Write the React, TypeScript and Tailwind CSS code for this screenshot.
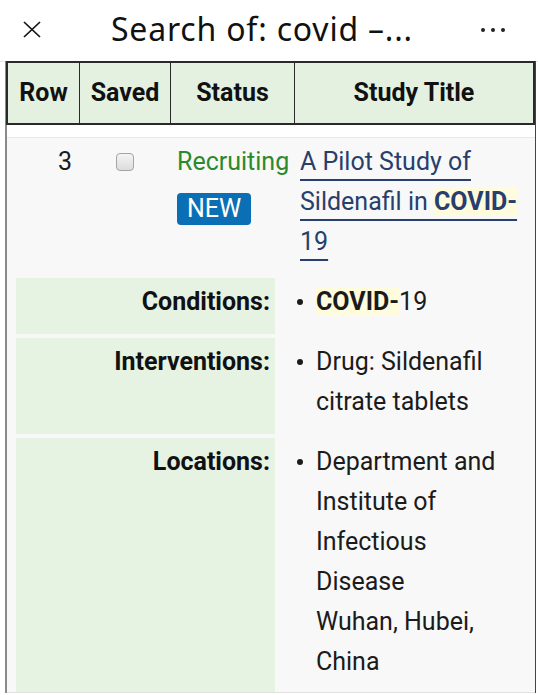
import React from "react";

const roboto = { fontFamily: "Roboto, 'Liberation Sans', sans-serif" };

function Hl({ children }: { children: React.ReactNode }) {
  return <b className="bg-[#fffbdd] font-bold">{children}</b>;
}

function DetailRow({ label, children, h }: { label: string; children: React.ReactNode; h: string }) {
  return (
    <div className={`flex ${h}`}>
      <div className="w-[259px] shrink-0 bg-[#e6f3e2] pr-[5px] pt-[4px] text-right font-bold text-[#111]">
        {label}
      </div>
      <div className="flex flex-1 pl-[22px] pr-[22px] pt-[4px] text-[#1b1b1b]">
        <span className="flex h-[40px] w-[19px] shrink-0 items-center">
          <span className="h-[6px] w-[6px] rounded-full bg-[#1b1b1b]" />
        </span>
        <div>{children}</div>
      </div>
    </div>
  );
}

export default function App() {
  return (
    <div className="h-[695px] w-[538px] overflow-hidden bg-white">
      {/* top bar */}
      <div className="flex h-[62px] items-center border-b border-[#e6e6e6] pb-[4px]">
        <svg width="18" height="17" viewBox="0 0 18 17" className="ml-[23px] mt-[2px]">
          <path d="M1 1 L17 16 M17 1 L1 16" stroke="#111" strokeWidth="1.7" />
        </svg>
        <div
          className="ml-[70px] text-[32px] leading-none text-[#111] tracking-[0.8px]"
          style={{ fontFamily: "'Noto Sans', 'Open Sans', sans-serif" }}
        >
          Search of: covid –...
        </div>
        <div className="ml-auto mr-[33px] flex gap-[6px] pt-[2px]">
          <span className="h-[4px] w-[4px] rounded-full bg-[#222]" />
          <span className="h-[4px] w-[4px] rounded-full bg-[#222]" />
          <span className="h-[4px] w-[4px] rounded-full bg-[#222]" />
        </div>
      </div>

      <div className="ml-[5px] mr-[2px] border-l-2 border-r border-l-[#8a8a8a] border-r-[#444]" style={roboto}>
        {/* header row */}
        <div className="-ml-[1px] -mt-[1px] flex h-[64px] border-2 border-[#2a2a2a] bg-[#e4f1e0] text-[25px] font-bold text-[#111]">
          <div className="flex w-[72px] items-center justify-center border-r-[1.5px] border-[#2a2a2a]">Row</div>
          <div className="flex w-[91px] items-center justify-center border-r-[1.5px] border-[#2a2a2a]">Saved</div>
          <div className="flex w-[124px] items-center justify-center border-r-[1.5px] border-[#2a2a2a]">Status</div>
          <div className="flex flex-1 items-center justify-center">Study Title</div>
        </div>
        <div className="h-[12px] bg-white" />

        {/* body */}
        <div className="border-t border-[#e8e8e8] bg-[#f8f8f8] pt-[4px] text-[25px] leading-[40px]">
          <div className="flex">
            <div className="w-[72px] pr-[7px] text-right text-[#1b1b1b]">3</div>
            <div className="flex w-[91px] justify-center pt-[11px]">
              <span className="h-[18px] w-[18px] rounded-[4px] border border-[#a5a5a5] bg-gradient-to-b from-[#f4f4f4] to-[#dcdcdc]" />
            </div>
            <div className="w-[124px] pl-[7px]">
              <div className="text-[#2b8a2b]">Recruiting</div>
              <div className="pt-[7px]">
                <span className="inline-block rounded-[4px] bg-[#0b6fb5] px-[10px] text-[25px] leading-[32px] text-white">
                  NEW
                </span>
              </div>
            </div>
            <div className="flex-1 pl-[6px] pr-[2px] text-[#283e6c]">
              <span className="underline decoration-[#283e6c] decoration-[1.5px] underline-offset-[9px]">
                A Pilot Study of Sildenafil in <Hl>COVID-</Hl>
                <wbr />
                19
              </span>
            </div>
          </div>

          <div className="mt-[16px] flex flex-col gap-[4px] border-b border-[#e2e2e2] pl-[9px]">
            <DetailRow label="Conditions:" h="h-[56px]">
              <Hl>COVID-</Hl>19
            </DetailRow>
            <DetailRow label="Interventions:" h="h-[96px]">
              Drug: Sildenafil citrate tablets
            </DetailRow>
            <DetailRow label="Locations:" h="h-[254px]">
              Department and Institute of Infectious Disease
              <br />
              Wuhan, Hubei, China
            </DetailRow>
          </div>
        </div>
      </div>
    </div>
  );
}
